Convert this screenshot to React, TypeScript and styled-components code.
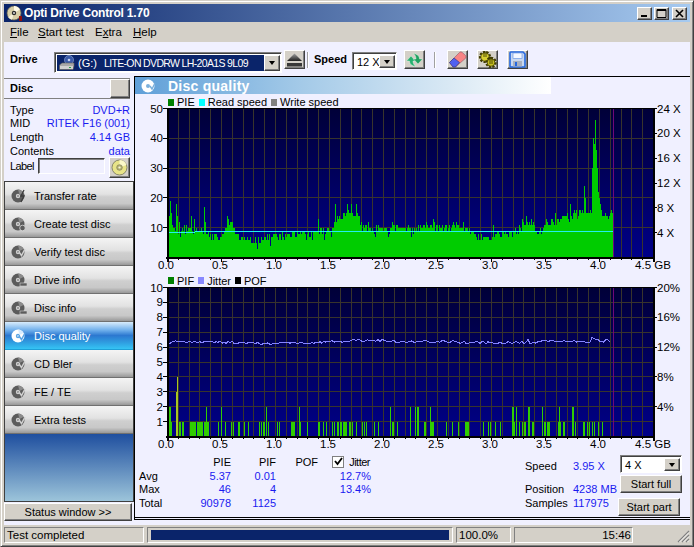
import styled, { createGlobalStyle, css } from "styled-components";

const GlobalStyle = createGlobalStyle`
  html, body { margin: 0; padding: 0; }
  * { box-sizing: border-box; }
  body { font-family: "Liberation Sans", Arial, sans-serif; font-size: 11px; color: #000; }
`;

const raised = css`
  background: #d4d0c8;
  border: 1px solid;
  border-color: #ffffff #404040 #404040 #ffffff;
  box-shadow: inset -1px -1px 0 #808080;
`;

const sunken = css`
  border: 1px solid;
  border-color: #808080 #ffffff #ffffff #808080;
`;

const Window = styled.div`
  width: 694px;
  height: 547px;
  padding: 3px;
  background: #d4d0c8;
  display: flex;
  flex-direction: column;
  overflow: hidden;
  border: 1px solid;
  border-color: #d4d0c8 #404040 #404040 #d4d0c8;
  box-shadow: inset 1px 1px 0 #fff, inset -1px -1px 0 #808080;
`;

const TitleBar = styled.div`
  height: 18px;
  flex: none;
  display: flex;
  align-items: center;
  padding: 0 3px 0 2px;
  gap: 1px;
  background: linear-gradient(90deg, #0a246a, #a6caf0);
`;

const TitleText = styled.div`
  flex: 1;
  color: #fff;
  font-weight: bold;
  font-size: 12px;
  letter-spacing: -0.2px;
`;

const WinButton = styled.div<{ $gap?: number }>`
  ${raised}
  width: 15px;
  height: 13px;
  margin-left: ${(p) => p.$gap ?? 0}px;
  display: flex;
  align-items: center;
  justify-content: center;
`;

const MenuBar = styled.div`
  height: 20px;
  flex: none;
  display: flex;
  align-items: center;
  background: #d4d0c8;
`;

const MenuItem = styled.span<{ $w: number }>`
  width: ${(p) => p.$w}px;
  font-size: 11.5px;
  &:first-child { margin-left: 6px; }
`;

const Toolbar = styled.div`
  height: 34px;
  flex: none;
  display: flex;
  align-items: flex-start;
  padding-top: 8px;
  background: #f0f0ff;
`;

const ToolLabel = styled.div<{ $w: number; $gap: number }>`
  width: ${(p) => p.$w}px;
  margin-left: ${(p) => p.$gap}px;
  height: 18px;
  line-height: 18px;
  font-weight: bold;
`;

const Combo = styled.div<{ $w: number; $h: number }>`
  width: ${(p) => p.$w}px;
  height: ${(p) => p.$h}px;
  flex: none;
  margin-top: 2px;
  display: flex;
  align-items: stretch;
  padding: 1px;
  background: #fff;
  border: 1px solid;
  border-color: #808080 #fff #fff #808080;
  box-shadow: inset 1px 1px 0 #404040;
`;

const ComboValue = styled.div<{ $selected?: boolean }>`
  flex: 1;
  display: flex;
  align-items: center;
  padding-left: 2px;
  margin: 1px 0 0 1px;
  color: ${(p) => (p.$selected ? "#fff" : "#000")};
  background: ${(p) => (p.$selected ? "#0a246a" : "#fff")};
  overflow: hidden;
  white-space: nowrap;
`;

const ComboArrow = styled.div`
  ${raised}
  width: 16px;
  flex: none;
  margin-top: 1px;
  display: flex;
  align-items: center;
  justify-content: center;
  &::after {
    content: "";
    border: 3px solid transparent;
    border-top: 4px solid #000;
    border-bottom: 0;
  }
`;

const DriveLetter = styled.span`
  margin-left: 3px;
`;

const DriveName = styled.span`
  margin-left: 7px;
  font-size: 10.5px;
  letter-spacing: -0.65px;
`;

const ToolButton = styled.div<{ $gap: number }>`
  ${raised}
  width: 21px;
  height: 19px;
  flex: none;
  margin-left: ${(p) => p.$gap}px;
  display: flex;
  align-items: center;
  justify-content: center;
`;

const ToolSep = styled.div<{ $gap: number }>`
  width: 2px;
  height: 16px;
  flex: none;
  margin: 2px 0 0 ${(p) => p.$gap}px;
  background: linear-gradient(90deg, #a0a0a0 50%, #fff 50%);
`;

const Main = styled.div`
  flex: 1;
  display: flex;
  min-height: 0;
  background: #f0f0ff;
`;

const Sidebar = styled.div`
  width: 130px;
  flex: none;
  display: flex;
  flex-direction: column;
`;

const DiscPanel = styled.div`
  width: 126px;
  height: 105px;
  flex: none;
  padding-top: 2px;
`;

const DiscHeader = styled.div`
  height: 21px;
  display: flex;
  align-items: stretch;
  justify-content: space-between;
  border-top: 1px solid #808080;
  border-bottom: 1px solid #808080;
  font-weight: bold;
`;

const DiscTitle = styled.div`
  padding-left: 6px;
  line-height: 18px;
`;

const SquareButton = styled.div`
  ${raised}
  width: 20px;
`;

const InfoRows = styled.div`
  padding: 4.5px 0 0 6px;
`;

const InfoRow = styled.div`
  height: 13.75px;
  line-height: 13.75px;
  display: flex;
  justify-content: space-between;
`;

const BlueValue = styled.span`
  color: #1a1af0;
`;

const LabelRow = styled.div`
  display: flex;
  align-items: flex-start;
  padding-left: 6px;
  margin-top: -1.5px;
`;

const LabelText = styled.span`
  width: 28px;
  line-height: 18px;
  letter-spacing: -0.6px;
`;

const LabelInput = styled.div`
  width: 67px;
  height: 16px;
  margin-top: 1px;
  background: #f0f0ff;
  border: 1px solid;
  border-color: #404040 #fff #fff #404040;
  box-shadow: inset 1px 1px 0 #808080;
`;

const DiscButton = styled.div`
  ${raised}
  width: 21px;
  height: 21px;
  margin-left: 4px;
  display: flex;
  align-items: center;
  justify-content: center;
`;

const Nav = styled.div`
  height: 321px;
  flex: none;
  display: flex;
  flex-direction: column;
  border: 1px solid #404040;
`;

const NavItem = styled.div<{ $active?: boolean }>`
  height: 28px;
  flex: none;
  display: flex;
  align-items: center;
  padding-left: 5px;
  gap: 6px;
  color: ${(p) => (p.$active ? "#fff" : "#000")};
  border-bottom: 1px solid ${(p) => (p.$active ? "#1fa0d8" : "#707070")};
  background: ${(p) =>
    p.$active
      ? "linear-gradient(180deg, #d8ecfc 0%, #70b0ec 30%, #2c78d0 50%, #2f9ce0 75%, #35c4f4 100%)"
      : "linear-gradient(180deg, #f4f4f4 0%, #e2e2e2 45%, #cfcfcf 55%, #c8c8c8 80%, #989898 100%)"};
`;

const NavFill = styled.div`
  flex: 1;
  background: linear-gradient(180deg, #1f4f9f, #9cc4da);
`;

const StatusWindowButton = styled.div`
  ${raised}
  width: 128px;
  height: 18px;
  flex: none;
  margin-top: 1px;
  text-align: center;
  line-height: 16px;
`;

const Content = styled.div`
  width: 556px;
  height: 444px;
  flex: none;
  display: flex;
  flex-direction: column;
  border-top: 1px solid #000;
  border-left: 1px solid #000;
  border-bottom: 3px double #000;
`;

const Header = styled.div`
  width: 416px;
  height: 17px;
  flex: none;
  display: flex;
  align-items: center;
  gap: 12px;
  padding-left: 5px;
  background: linear-gradient(90deg, #5f9fd8 0%, #a4cae8 40%, #d8e8f4 75%, #ffffff 100%);
  color: #fff;
  font-size: 14px;
  font-weight: bold;
  letter-spacing: 0.25px;
`;

const Legend = styled.div<{ $top: number; $h: number }>`
  height: ${(p) => p.$h}px;
  margin-top: ${(p) => p.$top}px;
  flex: none;
  display: flex;
  align-items: center;
  padding-left: 32px;
  gap: 3px;
`;

const Swatch = styled.i<{ $color: string }>`
  display: block;
  width: 6px;
  height: 7px;
  margin-left: 1px;
  background: ${(p) => p.$color};
`;

const ChartSvg = styled.svg`
  display: block;
  flex: none;
  overflow: visible;
  text {
    font-family: "Liberation Sans", Arial, sans-serif;
    font-size: 11.5px;
    fill: #000;
  }
`;

const Stats = styled.div`
  flex: 1;
  display: flex;
  padding: 3px 0 0 4px;
`;

const StatGrid = styled.div`
  display: grid;
  grid-template-columns: 41px 51px 45px 42px 53px;
  grid-auto-rows: 13.7px;
  align-items: center;
  width: 232px;
  flex: none;
`;

const Cell = styled.div<{ $blue?: boolean }>`
  text-align: right;
  color: ${(p) => (p.$blue ? "#1a1af0" : "#000")};
`;

const RowLabel = styled.div``;

const JitterCell = styled.div`
  display: flex;
  align-items: center;
  justify-content: flex-end;
  gap: 5px;
  padding-right: 1px;
  letter-spacing: -0.5px;
`;

const CheckBox = styled.div`
  width: 12px;
  height: 12px;
  background: #fff;
  border: 1px solid;
  border-color: #404040 #fff #fff #404040;
  outline: 1px solid #808080;
  outline-offset: -1px;
  display: flex;
  align-items: center;
  justify-content: center;
`;

const ReadoutBlock = styled.div`
  width: 95px;
  flex: none;
  margin-left: 154px;
  padding-top: 4px;
`;

const Readout = styled.div<{ $gap?: number }>`
  display: flex;
  height: 14px;
  align-items: center;
  margin-top: ${(p) => p.$gap ?? 0}px;
  span:first-child { width: 48px; }
`;

const Controls = styled.div`
  width: 62px;
  flex: none;
  display: flex;
  flex-direction: column;
`;

const SpeedCombo = styled(Combo)`
  margin-top: 0;
`;

const ActionButton = styled.div<{ $shift?: number; $gap: number }>`
  ${raised}
  height: 18px;
  margin-top: ${(p) => p.$gap}px;
  margin-left: ${(p) => p.$shift ?? 0}px;
  text-align: center;
  line-height: 16px;
  flex: none;
  width: 62px;
`;

const StatusBar = styled.div`
  height: 18px;
  flex: none;
  display: flex;
  align-items: flex-end;
  gap: 3px;
  padding-top: 2px;
  background: #d4d0c8;
`;

const StatusCell = styled.div<{ $w: number; $right?: boolean }>`
  ${sunken}
  width: ${(p) => p.$w}px;
  height: 16px;
  flex: none;
  padding: 0 1px 0 2px;
  line-height: 14px;
  font-size: 11.5px;
  text-align: ${(p) => (p.$right ? "right" : "left")};
  overflow: hidden;
`;

const ProgressCell = styled(StatusCell)`
  padding: 2px 3px;
`;

const ProgressFill = styled.div`
  height: 10px;
  background: #0a246a;
`;

const Grip = styled.svg`
  margin-left: auto;
  display: block;
`;

/* ---- icons ---- */

function TitleDisc() {
  return (
    <svg width="17" height="17" viewBox="0 0 17 17">
      <circle cx="8" cy="8" r="7" fill="#d8cfa8" stroke="#6a6450" strokeWidth="0.7" />
      <path d="M8 1a7 7 0 0 1 6 3.5L8 8z" fill="#fffbe8" />
      <path d="M2 12a7 7 0 0 0 4 2.7L8 8z" fill="#f4f0d8" />
      <circle cx="8" cy="8" r="2.2" fill="#2a2a2a" />
      <circle cx="8" cy="8" r="0.9" fill="#eee" />
      <rect x="13" y="11" width="3" height="5" fill="#8a1010" />
    </svg>
  );
}

function NavDisc({ active, mark }: { active?: boolean; mark: string }) {
  const c = active ? "#ffffff" : "#5c5c5c";
  const hole = active ? "#5aa4e4" : "#d0d0d0";
  return (
    <svg width="18" height="16" viewBox="0 0 18 16" style={{ flex: "none" }}>
      <circle cx="8" cy="8" r="6.5" fill={c} />
      <circle cx="8" cy="8" r="2.2" fill={hole} />
      <circle cx="8" cy="8" r="0.8" fill={c} />
      <path d="M8 1.5A6.5 6.5 0 0 1 13.5 5L9.5 7z" fill={active ? "#d8ecff" : "#8c8c8c"} />
      {mark === "bolt" && <path d="M14 2l-3 6h3l-3 6" fill="none" stroke="#3c3c3c" strokeWidth="1.3" />}
      {mark === "dot" && <circle cx="12.5" cy="12" r="2.8" fill="#5c5c5c" stroke="#e0e0e0" strokeWidth="0.8" />}
      {mark === "check" && <path d="M9 8l2.5 3.5L15 5" fill="none" stroke={hole} strokeWidth="1.5" />}
      {mark === "bar" && <rect x="10" y="11" width="7" height="3" fill={c} stroke={hole} strokeWidth="0.6" />}
    </svg>
  );
}

function DriveIcon() {
  return (
    <svg width="16" height="16" viewBox="0 0 16 16" style={{ flex: "none" }}>
      <circle cx="10" cy="5" r="4.5" fill="#3a5aa8" stroke="#8aa0d0" strokeWidth="0.7" />
      <circle cx="10" cy="5" r="1.3" fill="#c0d0f0" />
      <path d="M0.5 10L3 8h12v3l-1 3.5H0.5z" fill="#a8a8a8" stroke="#606060" strokeWidth="0.6" />
      <rect x="1" y="11" width="13" height="3" fill="#d0d0d0" />
      <rect x="10" y="12" width="2" height="1" fill="#20a040" />
    </svg>
  );
}

function EjectIcon() {
  return (
    <svg width="17" height="14" viewBox="0 0 17 14">
      <defs>
        <linearGradient id="ej" x1="0" y1="0" x2="0" y2="1">
          <stop offset="0" stopColor="#a0a0a0" />
          <stop offset="1" stopColor="#202020" />
        </linearGradient>
      </defs>
      <path d="M8.5 0.5L16 8H1z" fill="url(#ej)" />
      <rect x="1" y="10" width="15" height="3.5" fill="#383838" />
    </svg>
  );
}

function RefreshIcon() {
  return (
    <svg width="17" height="16" viewBox="0 0 17 16">
      <path d="M0.5 9L5 4l4.5 5H7c0 2 0.7 3.5 2.5 5.5C6 14 3.5 12 3.5 9z" fill="#28b070" stroke="#e8fff0" strokeWidth="0.4" />
      <path d="M16.5 7L12 12 7.5 7H10C10 5 9.3 3 7.5 1.5 11 2 13.5 4 13.5 7z" fill="#20a060" stroke="#e8fff0" strokeWidth="0.4" />
    </svg>
  );
}

function EraserIcon() {
  return (
    <svg width="19" height="17" viewBox="0 0 19 17">
      <path d="M1.5 11.5L11.5 1.5a2 2 0 0 1 2.8 0l3.2 3a2 2 0 0 1 0 2.8L7.5 16H5z" fill="#f88484" stroke="#905868" strokeWidth="0.6" />
      <path d="M1.5 11.5L6 7l5.5 4.5L7.5 16H5z" fill="#5060f0" stroke="#283080" strokeWidth="0.6" />
    </svg>
  );
}

function GearsIcon() {
  return (
    <svg width="19" height="17" viewBox="0 0 19 17">
      <circle cx="7" cy="6" r="4.6" fill="none" stroke="#403c00" strokeWidth="3" strokeDasharray="2 1.2" />
      <circle cx="7" cy="6" r="4.2" fill="#d8d030" stroke="#403c00" strokeWidth="0.8" />
      <circle cx="13" cy="11.5" r="4.2" fill="none" stroke="#403c00" strokeWidth="3" strokeDasharray="2 1.2" />
      <circle cx="13" cy="11.5" r="3.8" fill="#c8c020" stroke="#403c00" strokeWidth="0.8" />
      <path d="M6 0v6M8 0v6M12 7v6M14 7v6" stroke="#403c00" strokeWidth="0.9" />
    </svg>
  );
}

function SaveIcon() {
  return (
    <svg width="17" height="17" viewBox="0 0 17 17">
      <path d="M1 1.8a.8.8 0 0 1 .8-.8H14l2 2v12.2a.8.8 0 0 1-.8.8H1.8a.8.8 0 0 1-.8-.8z" fill="#c8d8f0" stroke="#2468e0" strokeWidth="1.6" />
      <rect x="4" y="2" width="9" height="5.5" fill="#f4f8ff" stroke="#5a8ae0" strokeWidth="0.6" />
      <rect x="4" y="10" width="9" height="5.5" fill="#a8b0c0" />
      <rect x="6" y="11" width="2" height="4" fill="#2468e0" />
    </svg>
  );
}

function LabelDisc() {
  return (
    <svg width="17" height="17" viewBox="0 0 17 17">
      <circle cx="8.5" cy="8.5" r="7.5" fill="#e8e488" stroke="#70705a" strokeWidth="0.8" />
      <path d="M8.5 1a7.5 7.5 0 0 1 7 5L8.5 8.5z" fill="#fbf8c8" />
      <circle cx="8.5" cy="8.5" r="2.8" fill="#b8b470" stroke="#70705a" strokeWidth="0.6" />
      <circle cx="8.5" cy="8.5" r="1.1" fill="#f4f4e0" />
    </svg>
  );
}

/* ---- chart data ---- */

function rng(seed: number) {
  let s = seed;
  return () => {
    s = (s * 1664525 + 1013904223) % 4294967296;
    return s / 4294967296;
  };
}

function lerp(points: number[][], x: number) {
  for (let i = 1; i < points.length; i++) {
    if (x <= points[i][0]) {
      const [x0, y0] = points[i - 1];
      const [x1, y1] = points[i];
      return y0 + ((y1 - y0) * (x - x0)) / (x1 - x0);
    }
  }
  return points[points.length - 1][1];
}

const X0 = 32;
const PLOT_W = 486;
const PLOT_H = 149;
const PLOT_TOP = 0.5;
const END_X = 613 - 135;

// page x -> PIE level, read off the reference
const pieLevel = [
  [167, 9], [169, 13], [172, 10], [180, 9], [190, 10], [200, 10], [208, 8], [215, 6.5], [222, 7],
  [226, 10], [232, 11], [236, 8], [240, 6.5], [250, 5.5], [258, 6], [262, 6.5], [270, 7], [280, 7.5],
  [300, 8], [312, 8], [325, 9], [332, 10], [335, 13], [345, 14.5], [358, 14], [362, 11], [370, 9],
  [380, 10], [390, 9.5], [410, 10], [430, 10.5], [440, 10], [460, 10.5], [470, 9], [475, 7], [490, 6.5],
  [497, 8], [517, 8.5], [522, 11], [532, 12], [536, 8.5], [541, 9], [546, 12], [557, 12.5], [565, 14],
  [583, 15], [590, 15.5], [600, 15], [606, 14], [613, 15],
];

const pieSpikes: Record<number, number> = {
  170: 19, 171: 15, 176: 18, 177: 14, 179: 12, 184: 11, 191: 14, 194: 13, 204: 17, 205: 12, 227: 14, 228: 13,
  230: 12, 283: 7, 284: 6, 318: 13, 335: 18, 347: 18, 351: 18, 356: 18, 368: 12, 376: 11, 392: 12, 397: 11,
  433: 13, 434: 12, 456: 12, 463: 12, 493: 11, 522: 13, 526: 14, 555: 15, 570: 18, 574: 16, 584: 24, 585: 20,
  592: 30, 593: 40, 594: 38, 595: 46, 596: 36, 597: 30, 598: 22, 599: 20, 600: 18,
};

function buildPie() {
  const r = rng(11);
  let d = "";
  for (let px = 167; px < 613; px++) {
    const n = r();
    let v = Math.round(lerp(pieLevel, px) + (n - 0.5) * 2.6);
    if (r() < 0.06) v -= 2;
    if (pieSpikes[px]) v = pieSpikes[px];
    const y = PLOT_TOP + PLOT_H - (v * PLOT_H) / 50;
    const x = px - 135 + 0.5;
    d += `M${x} ${PLOT_TOP + PLOT_H}V${y.toFixed(1)}`;
  }
  return d;
}

// PIF bars [start, end, value], x in page pixels
const pifBars: number[][] = [
  [167, 172, 1], [169, 170, 2], [170, 171, 2], [176, 177, 3], [177, 178, 4], [179, 181, 1], [182, 184, 1], [190, 196, 1],
  [197, 203, 1], [204, 209, 1], [206, 207, 2], [218, 219, 1], [221, 222, 2], [225, 226, 1], [231, 232, 1], [233, 234, 1],
  [238, 240, 1], [244, 245, 1], [248, 249, 1], [259, 260, 1], [261, 262, 1], [263, 265, 1], [266, 267, 2], [268, 269, 1],
  [277, 278, 1], [279, 280, 1], [291, 295, 1], [299, 300, 2], [299, 301, 1], [307, 308, 1], [318, 320, 1], [323, 324, 1],
  [326, 327, 1], [332, 333, 1], [334, 335, 1], [337, 339, 1], [340, 342, 1], [343, 347, 1], [349, 351, 1], [352, 353, 1],
  [356, 357, 1], [362, 363, 1], [364, 365, 1], [366, 367, 1], [374, 375, 1], [378, 379, 1], [390, 391, 2], [392, 394, 1],
  [397, 398, 1], [410, 411, 2], [415, 416, 2], [417, 419, 2], [424, 426, 1], [430, 434, 1], [430, 431, 2], [446, 447, 1],
  [452, 453, 1], [458, 459, 1], [465, 469, 1], [483, 484, 1], [488, 489, 1], [490, 491, 1], [495, 496, 1], [500, 501, 1],
  [512, 515, 1], [512, 514, 2], [516, 517, 2], [519, 520, 1], [522, 523, 1], [524, 526, 1], [528, 530, 2], [528, 530, 1],
  [532, 534, 1], [542, 543, 2], [544, 546, 1], [547, 550, 1], [558, 561, 1], [559, 560, 2], [563, 565, 1], [572, 574, 2],
  [572, 574, 1], [575, 576, 1], [583, 585, 1], [587, 588, 1], [589, 590, 1], [592, 593, 1], [594, 595, 1], [598, 599, 1],
  [602, 603, 1],
];

function buildJitter() {
  const r = rng(37);
  const level = [
    [168, 343], [175, 341.5], [220, 341.5], [260, 343], [300, 342.5], [340, 341], [370, 339.5], [400, 341],
    [450, 341.5], [500, 342.5], [522, 342], [528, 340], [533, 343], [545, 340.5], [580, 341], [590, 339.5], [611, 339.5],
  ];
  const pts: string[] = [];
  for (let px = 168; px <= 611; px += 2) {
    const amp = px > 585 ? 5 : px > 520 && px < 532 ? 4 : 2.5;
    const y = lerp(level, px) + (r() - 0.5) * amp;
    pts.push(`${px - 135},${(y - 287 + PLOT_TOP).toFixed(1)}`);
  }
  return pts.join(" ");
}

const piePath = buildPie();
const jitterPoints = buildJitter();

const gbLabels = ["0.0", "0.5", "1.0", "1.5", "2.0", "2.5", "3.0", "3.5", "4.0"];

type ChartProps = {
  id: string;
  left: { label: string; value: number }[];
  leftMax: number;
  hStep: number;
  right: { label: string; frac: number }[];
  height: number;
  children: React.ReactNode;
};

function Chart({ id, left, leftMax, hStep, right, height, children }: ChartProps) {
  const bottom = PLOT_TOP + PLOT_H;
  const vLines = Array.from({ length: 46 }, (_, i) => X0 + 0.5 + (i * PLOT_W) / 45);
  const hLines: number[] = [];
  for (let v = hStep; v < leftMax; v += hStep) hLines.push(bottom - (v * PLOT_H) / leftMax);
  return (
    <ChartSvg width={555} height={height}>
      <defs>
        <linearGradient id={id} x1="0" y1="0" x2="0" y2="1">
          <stop offset="0" stopColor="#000038" />
          <stop offset="1" stopColor="#000088" />
        </linearGradient>
      </defs>
      <rect x={X0} y={PLOT_TOP} width={PLOT_W} height={PLOT_H} fill={`url(#${id})`} />
      <g stroke="#38342c" strokeWidth="1" shapeRendering="crispEdges">
        {vLines.map((x) => (
          <line key={x} x1={x} x2={x} y1={PLOT_TOP} y2={bottom} />
        ))}
        {hLines.map((y) => (
          <line key={y} x1={X0} x2={X0 + PLOT_W} y1={y} y2={y} />
        ))}
      </g>
      {children}
      <line x1={END_X + 0.5} x2={END_X + 0.5} y1={PLOT_TOP} y2={bottom} stroke="#700878" shapeRendering="crispEdges" />
      <g stroke="#000" shapeRendering="crispEdges">
        <line x1={X0 - 4} x2={X0 + PLOT_W + 4} y1={PLOT_TOP} y2={PLOT_TOP} />
        <line x1={X0 - 1} x2={X0 + PLOT_W + 1} y1={bottom} y2={bottom} strokeWidth="2" />
        <line x1={X0 + 0.5} x2={X0 + 0.5} y1={PLOT_TOP} y2={bottom + 4} strokeWidth="2" />
        <line x1={X0 + PLOT_W + 0.5} x2={X0 + PLOT_W + 0.5} y1={PLOT_TOP} y2={bottom + 4} strokeWidth="2" />
        {vLines.map((x, i) => (
          <line key={x} x1={x} x2={x} y1={bottom} y2={bottom + (i % 5 === 0 ? 4 : 2)} />
        ))}
        {left.map((t) => {
          const y = bottom - (t.value * PLOT_H) / leftMax;
          return <line key={t.label} x1={X0 - 4} x2={X0} y1={y} y2={y} />;
        })}
        {right.map((t) => {
          const y = bottom - t.frac * PLOT_H;
          return <line key={t.label} x1={X0 + PLOT_W} x2={X0 + PLOT_W + 4} y1={y} y2={y} />;
        })}
      </g>
      {left.map((t) => (
        <text key={t.label} x={X0 - 4} y={bottom - (t.value * PLOT_H) / leftMax + 4} textAnchor="end">
          {t.label}
        </text>
      ))}
      {right.map((t) => (
        <text key={t.label} x={X0 + PLOT_W + 4} y={bottom - t.frac * PLOT_H + 4}>
          {t.label}
        </text>
      ))}
      {gbLabels.map((l, i) => (
        <text key={l} x={X0 - 1 + i * 54} y={bottom + 11} textAnchor="middle">
          {l}
        </text>
      ))}
      <text x={X0 + PLOT_W} y={bottom + 11} textAnchor="middle">
        4.5 GB
      </text>
    </ChartSvg>
  );
}

const topLeft = [50, 40, 30, 20, 10].map((v) => ({ label: String(v), value: v }));
const topRight = [24, 20, 16, 12, 8, 4].map((v) => ({ label: `${v} X`, frac: v / 24 }));
const bottomLeft = [10, 9, 8, 7, 6, 5, 4, 3, 2, 1].map((v) => ({ label: String(v), value: v }));
const bottomRight = [20, 16, 12, 8, 4].map((v) => ({ label: `${v}%`, frac: v / 20 }));

const navItems = [
  { label: "Transfer rate", mark: "bolt" },
  { label: "Create test disc", mark: "dot" },
  { label: "Verify test disc", mark: "check" },
  { label: "Drive info", mark: "bar" },
  { label: "Disc info", mark: "bar" },
  { label: "Disc quality", mark: "check", active: true },
  { label: "CD Bler", mark: "check" },
  { label: "FE / TE", mark: "check" },
  { label: "Extra tests", mark: "check" },
];

function App() {
  return (
    <>
      <GlobalStyle />
      <Window>
        <TitleBar>
          <TitleDisc />
          <TitleText>Opti Drive Control 1.70</TitleText>
          <WinButton>
            <svg width="9" height="9"><rect x="1" y="6" width="6" height="2" fill="#000" /></svg>
          </WinButton>
          <WinButton $gap={1}>
            <svg width="11" height="9"><path d="M1 0.5h9v8h-9zM1 1.5h9" fill="none" stroke="#000" /></svg>
          </WinButton>
          <WinButton $gap={2}>
            <svg width="10" height="9"><path d="M1 1l7 7M8 1l-7 7" stroke="#000" strokeWidth="1.6" /></svg>
          </WinButton>
        </TitleBar>
        <MenuBar>
          <MenuItem $w={28}><u>F</u>ile</MenuItem>
          <MenuItem $w={57}><u>S</u>tart test</MenuItem>
          <MenuItem $w={38}>E<u>x</u>tra</MenuItem>
          <MenuItem $w={30}><u>H</u>elp</MenuItem>
        </MenuBar>
        <Toolbar>
          <ToolLabel $w={44} $gap={6}>Drive</ToolLabel>
          <Combo $w={228} $h={21}>
            <ComboValue $selected>
              <DriveIcon />
              <DriveLetter>(G:)</DriveLetter>
              <DriveName>LITE-ON DVDRW LH-20A1S 9L09</DriveName>
            </ComboValue>
            <ComboArrow />
          </Combo>
          <ToolButton $gap={2}><EjectIcon /></ToolButton>
          <ToolSep $gap={2} />
          <ToolLabel $w={38} $gap={5}>Speed</ToolLabel>
          <Combo $w={45} $h={18}>
            <ComboValue>12 X</ComboValue>
            <ComboArrow />
          </Combo>
          <ToolButton $gap={7}><RefreshIcon /></ToolButton>
          <ToolSep $gap={9} />
          <ToolButton $gap={11}><EraserIcon /></ToolButton>
          <ToolButton $gap={9}><GearsIcon /></ToolButton>
          <ToolButton $gap={9}><SaveIcon /></ToolButton>
        </Toolbar>
        <Main>
          <Sidebar>
            <DiscPanel>
              <DiscHeader>
                <DiscTitle>Disc</DiscTitle>
                <SquareButton />
              </DiscHeader>
              <InfoRows>
                <InfoRow><span>Type</span><BlueValue>DVD+R</BlueValue></InfoRow>
                <InfoRow><span>MID</span><BlueValue>RITEK F16 (001)</BlueValue></InfoRow>
                <InfoRow><span>Length</span><BlueValue>4.14 GB</BlueValue></InfoRow>
                <InfoRow><span>Contents</span><BlueValue>data</BlueValue></InfoRow>
              </InfoRows>
              <LabelRow>
                <LabelText>Label</LabelText>
                <LabelInput />
                <DiscButton><LabelDisc /></DiscButton>
              </LabelRow>
            </DiscPanel>
            <Nav>
              {navItems.map((item) => (
                <NavItem key={item.label} $active={item.active}>
                  <NavDisc active={item.active} mark={item.mark} />
                  {item.label}
                </NavItem>
              ))}
              <NavFill />
            </Nav>
            <StatusWindowButton>Status window &gt;&gt;</StatusWindowButton>
          </Sidebar>
          <Content>
            <Header>
              <svg width="16" height="16" viewBox="0 0 16 16">
                <circle cx="8" cy="8" r="6.5" fill="#fff" />
                <circle cx="8" cy="8" r="2" fill="#7cb0dc" />
                <path d="M10 8l2 3 3-6" fill="none" stroke="#7cb0dc" strokeWidth="1.4" />
              </svg>
              Disc quality
            </Header>
            <Legend $top={2} $h={12}>
              <Swatch $color="#008000" />PIE
              <Swatch $color="#00ffff" />Read speed
              <Swatch $color="#808080" />Write speed
            </Legend>
            <Chart id="topBg" left={topLeft} leftMax={50} hStep={10} right={topRight} height={166}>
              <path d={piePath} stroke="#00cc00" strokeWidth="1" fill="none" shapeRendering="crispEdges" />
              <path d="M32 124.5H60M60 123.5H478" stroke="#20f0f0" strokeWidth="1" shapeRendering="crispEdges" />
            </Chart>
            <Legend $top={0} $h={13}>
              <Swatch $color="#008000" />PIF
              <Swatch $color="#8888ff" />Jitter
              <Swatch $color="#000000" />POF
            </Legend>
            <Chart id="bottomBg" left={bottomLeft} leftMax={10} hStep={1} right={bottomRight} height={165}>
              {pifBars.map(([a, b, v], i) => (
                <rect
                  key={i}
                  x={a - 135}
                  width={b - a}
                  y={PLOT_TOP + PLOT_H - v * 14.9}
                  height={v * 14.9}
                  fill={v > 2 ? "#a8c820" : "#30cc00"}
                  shapeRendering="crispEdges"
                />
              ))}
              <polyline points={jitterPoints} fill="none" stroke="#8484ff" strokeWidth="1" shapeRendering="crispEdges" />
            </Chart>
            <Stats>
              <StatGrid>
                <span />
                <Cell>PIE</Cell>
                <Cell>PIF</Cell>
                <Cell>POF</Cell>
                <JitterCell>
                  <CheckBox>
                    <svg width="9" height="9"><path d="M1 4l2.5 3L8 1" fill="none" stroke="#000" strokeWidth="1.8" /></svg>
                  </CheckBox>
                  Jitter
                </JitterCell>
                <RowLabel>Avg</RowLabel>
                <Cell $blue>5.37</Cell>
                <Cell $blue>0.01</Cell>
                <span />
                <Cell $blue>12.7%</Cell>
                <RowLabel>Max</RowLabel>
                <Cell $blue>46</Cell>
                <Cell $blue>4</Cell>
                <span />
                <Cell $blue>13.4%</Cell>
                <RowLabel>Total</RowLabel>
                <Cell $blue>90978</Cell>
                <Cell $blue>1125</Cell>
              </StatGrid>
              <ReadoutBlock>
                <Readout><span>Speed</span><BlueValue>3.95 X</BlueValue></Readout>
                <Readout $gap={9}><span>Position</span><BlueValue>4238 MB</BlueValue></Readout>
                <Readout><span>Samples</span><BlueValue>117975</BlueValue></Readout>
              </ReadoutBlock>
              <Controls>
                <SpeedCombo $w={62} $h={18}>
                  <ComboValue>4 X</ComboValue>
                  <ComboArrow />
                </SpeedCombo>
                <ActionButton $gap={2}>Start full</ActionButton>
                <ActionButton $gap={5} $shift={-2}>Start part</ActionButton>
              </Controls>
            </Stats>
          </Content>
        </Main>
        <StatusBar>
          <StatusCell $w={140}>Test completed</StatusCell>
          <ProgressCell $w={306}><ProgressFill /></ProgressCell>
          <StatusCell $w={55}>100.0%</StatusCell>
          <StatusCell $w={119} $right>15:46</StatusCell>
          <Grip width="14" height="14" viewBox="0 0 14 14">
            <path d="M13 2L2 13M13 6L6 13M13 10L10 13" stroke="#808080" strokeWidth="1.2" />
            <path d="M13 3.5L3.5 13M13 7.5L7.5 13M13 11.5L11.5 13" stroke="#fff" strokeWidth="0.8" />
          </Grip>
        </StatusBar>
      </Window>
    </>
  );
}

export default App;
